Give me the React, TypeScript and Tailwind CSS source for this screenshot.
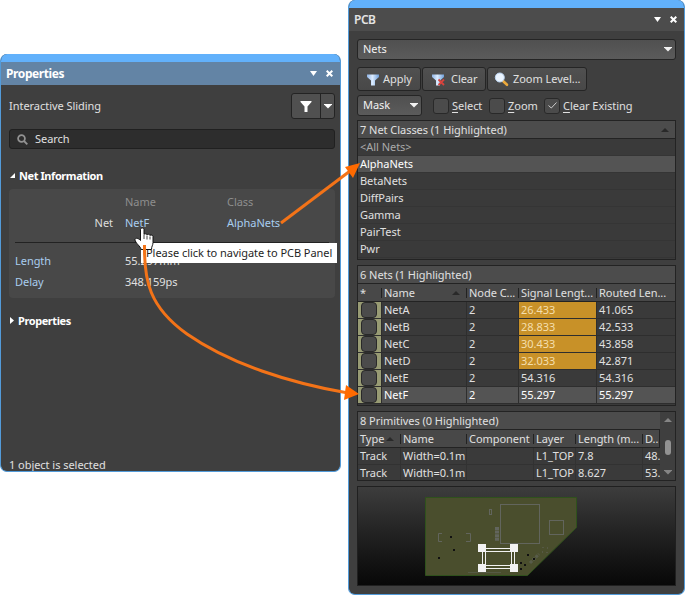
import type { ReactNode } from "react";

const netClasses = ["<All Nets>", "AlphaNets", "BetaNets", "DiffPairs", "Gamma", "PairTest", "Pwr"];

const nets = [
  { name: "NetA", nodes: 2, signal: "26.433", routed: "41.065", warn: true },
  { name: "NetB", nodes: 2, signal: "28.833", routed: "42.533", warn: true },
  { name: "NetC", nodes: 2, signal: "30.433", routed: "43.858", warn: true },
  { name: "NetD", nodes: 2, signal: "32.033", routed: "42.871", warn: true },
  { name: "NetE", nodes: 2, signal: "54.316", routed: "54.316", warn: false },
  { name: "NetF", nodes: 2, signal: "55.297", routed: "55.297", warn: false },
];

const primitives = [
  { type: "Track", name: "Width=0.1m", layer: "L1_TOP", length: "7.8", delay: "48." },
  { type: "Track", name: "Width=0.1m", layer: "L1_TOP", length: "8.627", delay: "53." },
];

const netGrid = "grid grid-cols-[23px_85px_52px_78px_1fr]";
const netCell = "flex items-center border-b border-l border-[#2e2e2e] pb-px pl-[2px]";
const primitiveGrid = "grid grid-cols-[42px_66px_67px_42px_67px_1fr]";
const primitiveCell = "flex items-center overflow-hidden border-b border-l border-[#323232] pb-px pl-[2px]";

const DownTriangle = ({ className = "" }: { className?: string }) => (
  <svg className={className} width="8" height="5" viewBox="0 0 8 5" fill="currentColor">
    <path d="M0 0h8v.5L4 4.500 0 .5z" />
  </svg>
);

const UpTriangle = ({ className = "" }: { className?: string }) => (
  <svg className={className} width="8" height="4" viewBox="0 0 8 4" fill="currentColor">
    <path d="M0 4h8L4 0z" />
  </svg>
);

const TitleButtons = () => (
  <span className="flex items-center gap-[9px] text-white">
    <svg width="7" height="5" viewBox="0 0 7 5" fill="currentColor">
      <path d="M0 0h7L3.500 5z" />
    </svg>
    <svg width="7" height="7" viewBox="0 0 7 7" stroke="currentColor" strokeWidth="2">
      <path d="M.7 .7l5.6 5.6M6.3 .7L.7 6.3" />
    </svg>
  </span>
);

const BlueFunnel = ({ crossed = false }: { crossed?: boolean }) => (
  <svg width="14" height="13" viewBox="0 0 14 13">
    <defs>
      <linearGradient id="funnel" x1="0" x2="1">
        <stop offset="0" stopColor="#8fb4e6" />
        <stop offset=".45" stopColor="#dcecff" />
        <stop offset="1" stopColor="#6f9fda" />
      </linearGradient>
    </defs>
    <path d="M1 1.500h12v2.500L9 7.500V12.500H5V7.500L1 4z" fill="url(#funnel)" />
    {crossed && <path d="M7.500 6.500l5.500 5.500M13 6.500L7.500 12" stroke="#d8433d" strokeWidth="1.8" />}
  </svg>
);

const Magnifier = () => (
  <svg width="15" height="15" viewBox="0 0 15 15">
    <path d="M9 9l4 3.800" stroke="#eba93c" strokeWidth="2.600" strokeLinecap="round" />
    <circle cx="5.800" cy="5.500" r="4.500" fill="#eaf4ff" stroke="#bcd5f2" />
  </svg>
);

const ToolButton = ({ icon, label, className }: { icon: ReactNode; label: string; className: string }) => (
  <button
    type="button"
    className={`flex h-6 items-center rounded-[3px] border border-[#252525] bg-linear-to-b from-[#505050] to-[#484848] ${className}`}
  >
    {icon}
    <span className="pb-px">{label}</span>
  </button>
);

const Option = ({ label, checked = false }: { label: string; checked?: boolean }) => (
  <label className="flex items-center gap-[3px]">
    <span className="flex size-4 items-center justify-center rounded-[3px] border border-[#292929] bg-[#4b4b4b]">
      {checked && (
        <svg width="9" height="7" viewBox="0 0 9 7" fill="none" stroke="#ccc">
          <path d="M.5 3.500L3.300 6 8.500 .5" />
        </svg>
      )}
    </span>
    <span>
      <span className="underline underline-offset-2">{label[0]}</span>
      {label.slice(1)}
    </span>
  </label>
);

const HeadCell = ({ label, sorted = false, first = false }: { label: string; sorted?: boolean; first?: boolean }) => (
  <div className="flex min-w-0 items-center overflow-hidden whitespace-nowrap">
    {!first && <span className="h-[10px] w-px shrink-0 bg-[#222]" />}
    <span className="pl-[2px]">{label}</span>
    {sorted && <UpTriangle className="mr-[6px] ml-auto shrink-0 text-[#292929]" />}
  </div>
);

const PropertiesPanel = () => (
  <section className="mt-[54px] flex h-[418px] w-[341px] flex-col overflow-hidden rounded-[7px] border border-t-0 border-[#539bd9] bg-[#3f3f3f]">
    <div className="h-2 shrink-0 bg-[#62b1fb]" />
    <header className="flex h-[23px] shrink-0 items-center justify-between bg-[#6384a5] pr-[7px] pl-[5px]">
      <h2 className="text-[12px] font-bold tracking-[-0.4px] text-white">Properties</h2>
      <TitleButtons />
    </header>
    <div className="mt-2 flex h-[26px] items-center justify-between pr-[5px] pl-2">
      <span className="pb-px">Interactive Sliding</span>
      <div className="flex h-[26px] w-11 rounded-[3px] border border-[#232323] bg-[#505050] text-white">
        <span className="flex flex-1 items-center justify-center">
          <svg width="12" height="11" viewBox="0 0 12 11" fill="currentColor">
            <path d="M.5 0h11v1L7.500 5.500V11h-3V5.500L.5 1z" />
          </svg>
        </span>
        <span className="flex w-[14px] items-center justify-center border-l border-[#232323]">
          <DownTriangle />
        </span>
      </div>
    </div>
    <div className="mt-[10px] mr-[5px] ml-2 flex h-5 items-center gap-[7px] rounded-[3px] border border-[#202020] bg-[#2d2d2d] pl-[7px]">
      <svg width="11" height="11" viewBox="0 0 11 11" fill="none" stroke="#929292" strokeWidth="1.8">
        <circle cx="4.500" cy="4.500" r="3.400" />
        <path d="M7 7l3.300 3.300" />
      </svg>
      <span className="pb-px">Search</span>
    </div>
    <div className="mt-[18px] flex h-[18px] items-center gap-[4px] pb-px pl-[9px] font-bold tracking-[-0.42px] text-white">
      <svg width="5" height="5" viewBox="0 0 5 5" fill="currentColor">
        <path d="M5 0v5H0z" />
      </svg>
      <span>Net Information</span>
    </div>
    <div className="mt-1 mr-[5px] ml-2 h-[109px] rounded-[4px] bg-[#484848] pt-[3px] pl-[6px]">
      <div className="grid h-5 grid-cols-[110px_102px_1fr] items-center pb-px text-[#8e8e8e]">
        <span />
        <span>Name</span>
        <span>Class</span>
      </div>
      <div className="grid h-[22px] grid-cols-[110px_102px_1fr] items-center pb-px text-[#a9cdef]">
        <span className="pr-3 text-right text-[#ddd]">Net</span>
        <span>NetF</span>
        <span>AlphaNets</span>
      </div>
      <div className="mt-2 mr-[6px] border-t border-[#222]" />
      <div className="mt-[7px] grid h-[21px] grid-cols-[110px_1fr] items-center">
        <span className="text-[#a9cdef]">Length</span>
        <span>55.297mm</span>
      </div>
      <div className="grid h-[21px] grid-cols-[110px_1fr] items-center">
        <span className="text-[#a9cdef]">Delay</span>
        <span>348.159ps</span>
      </div>
    </div>
    <div className="mt-[14px] flex h-[18px] items-center gap-[4px] pb-px pl-[9px] font-bold tracking-[-0.42px] text-white">
      <svg width="4" height="7" viewBox="0 0 4 7" fill="currentColor">
        <path d="M0 0v7l4-3.500z" />
      </svg>
      <span>Properties</span>
    </div>
    <footer className="mt-auto pl-2 leading-[13px]">1 object is selected</footer>
  </section>
);

const BoardPreview = () => (
  <svg className="block" width="317" height="98" viewBox="358 487 317 98" fill="none">
    <path d="M425.500 497.500h151v30l-49 48h-102z" fill="#4a4e2d" stroke="#2f511c" />
    <g stroke="#62655d">
      <rect x="500.500" y="504.500" width="39" height="39" />
      <rect x="549.500" y="520.500" width="14" height="14" />
      <path d="M442 533.500h-3.500v8h3.500M466 533.500h4.500v8h-4.500" />
      <rect x="489.500" y="509.500" width="2" height="5" />
      <path d="M497 527v14" strokeWidth="4" strokeDasharray="3 .6" />
      <path d="M530 563l9-9" strokeWidth="3" strokeDasharray="3 1" opacity=".6" />
      <rect x="542.500" y="547.500" width="5" height="5" strokeDasharray="1 4" />
      <path d="M468 572.500h33" opacity=".5" />
    </g>
    <g fill="#111">
      {[[450, 536], [453, 549], [438, 557], [527, 554], [533, 558], [520, 562], [524, 564], [520, 568]].map(([x, y]) => (
        <rect key={`${x}-${y}`} x={x} y={y} width="2" height="2" />
      ))}
    </g>
    <path d="M482 548.500h32M482 551.500h32M482 565.500h32M482 568.500h32M482.500 548v20M485.500 548v20M511.500 548v20M514.500 548v20" stroke="#f2f2f2" />
    <path d="M478 544h8v8h-8zM510 544h8v8h-8zM478 564h8v8h-8zM510 564h8v8h-8z" fill="#f2f2f2" />
  </svg>
);

const PcbPanel = () => (
  <section className="ml-[7px] h-[595px] w-[337px] overflow-hidden rounded-[7px] border border-t-0 border-[#539bd9] bg-[#3f3f3f]">
    <div className="h-2 bg-[#62b1fb]" />
    <header className="flex h-[23px] items-center justify-between bg-[#4c4c4c] pr-[7px] pl-[5px]">
      <h2 className="pb-px text-[12px] font-semibold tracking-[-0.5px] text-[#e4e4e4]">PCB</h2>
      <TitleButtons />
    </header>
    <div className="flex flex-col px-2 pt-2">
      <div className="flex h-[21px] items-center justify-between rounded-[3px] border border-[#252525] bg-linear-to-b from-[#505050] to-[#5b5b5b] pr-[3px] pl-[5px] text-[#f2f2f2]">
        <span className="pb-[2px]">Nets</span>
        <DownTriangle />
      </div>
      <div className="mt-[7px] flex gap-px">
        <ToolButton icon={<BlueFunnel />} label="Apply" className="w-16 gap-[3px] pl-2" />
        <ToolButton icon={<BlueFunnel crossed />} label="Clear" className="w-16 gap-[6px] pl-2" />
        <ToolButton icon={<Magnifier />} label="Zoom Level..." className="w-[100px] gap-[4px] pl-[6px]" />
      </div>
      <div className="mt-1 flex h-[21px] items-center">
        <div className="mr-[11px] flex h-[21px] w-[65px] items-center justify-between rounded-[3px] border border-[#252525] bg-linear-to-b from-[#505050] to-[#5b5b5b] pr-[3px] pl-[5px] text-[#f2f2f2]">
          <span className="pb-[2px]">Mask</span>
          <DownTriangle />
        </div>
        <div className="grid grid-cols-[56px_55px_auto]">
          <Option label="Select" />
          <Option label="Zoom" />
          <Option label="Clear Existing" checked />
        </div>
      </div>

      <div className="mt-1 h-[140px] border border-[#232323] bg-[#3a3a3a]">
        <div className="flex h-[18px] items-center justify-between border-b border-[#232323] bg-[#4c4c4c] pr-[6px] pl-[2px]">
          <span>7 Net Classes (1 Highlighted)</span>
          <UpTriangle className="text-[#292929]" />
        </div>
        {netClasses.map((name, index) => (
          <div
            key={name}
            className={`flex h-[17px] items-center border-b border-[#353535] pb-px pl-[2px] ${
              index === 0 ? "text-[#aaa]" : index === 1 ? "bg-[#545454] text-white" : ""
            }`}
          >
            {name}
          </div>
        ))}
      </div>

      <div className="mt-[5px] h-[141px] border border-[#232323] bg-[#3a3a3a]">
        <div className="flex h-[18px] items-center border-b border-[#232323] bg-[#4c4c4c] pl-[2px]">6 Nets (1 Highlighted)</div>
        <div className={`${netGrid} h-[18px] border-b border-[#232323] bg-[#484848]`}>
          <HeadCell label="*" first />
          <HeadCell label="Name" sorted />
          <HeadCell label="Node C..." />
          <HeadCell label="Signal Lengt..." />
          <HeadCell label="Routed Len..." />
        </div>
        {nets.map((net) => (
          <div key={net.name} className={`${netGrid} h-[17px] ${net.name === "NetF" ? "bg-[#545454] text-white" : ""}`}>
            <div className="flex items-center border-b border-[#2e2e2e] bg-[#989b74] pl-[3px]">
              <span className="h-4 w-4 rounded-[4px] border border-[#292929] bg-[#4b4b4b]" />
            </div>
            <div className={netCell}>{net.name}</div>
            <div className={netCell}>{net.nodes}</div>
            <div className={`${netCell} ${net.warn ? "bg-[#c89128] text-[#f4dfae]" : ""}`}>{net.signal}</div>
            <div className={netCell}>{net.routed}</div>
          </div>
        ))}
      </div>

      <div className="mt-[5px] flex h-[70px] border border-[#232323] bg-[#3a3a3a]">
        <div className="w-[302px] overflow-hidden">
          <div className="flex h-[18px] items-center border-b border-[#232323] bg-[#4c4c4c] pl-[2px]">8 Primitives (0 Highlighted)</div>
          <div className={`${primitiveGrid} h-[18px] border-r border-b border-[#232323] bg-[#484848]`}>
            <HeadCell label="Type" sorted first />
            <HeadCell label="Name" />
            <HeadCell label="Component" />
            <HeadCell label="Layer" />
            <HeadCell label="Length (m..." />
            <HeadCell label="D.." />
          </div>
          {primitives.map((item) => (
            <div key={item.length} className={`${primitiveGrid} h-[17px]`}>
              <div className="flex items-center border-b border-[#323232] pb-px pl-[2px]">{item.type}</div>
              <div className={primitiveCell}>{item.name}</div>
              <div className={primitiveCell} />
              <div className={primitiveCell}>{item.layer}</div>
              <div className={primitiveCell}>{item.length}</div>
              <div className={primitiveCell}>{item.delay}</div>
            </div>
          ))}
        </div>
        <div className="flex flex-1 flex-col items-center bg-[#3f3f3f] pt-[6px] pb-[5px] text-[#858585]">
          <UpTriangle />
          <span className="mt-[18px] h-[15px] w-[6px] rounded-full bg-[#929292]" />
          <DownTriangle className="mt-auto" />
        </div>
      </div>

      <div className="mt-[5px] h-[100px] border border-[#202020] bg-linear-to-b from-[#3d3d3d] to-[#080808]">
        <BoardPreview />
      </div>
    </div>
  </section>
);

const App = () => (
  <main className="relative flex h-[595px] w-[685px] items-start overflow-hidden bg-white font-['Noto_Sans',sans-serif] text-[11px] leading-[15px] tracking-[-0.04px] text-[#e0e0e0]">
    <PropertiesPanel />
    <PcbPanel />
    <div className="absolute top-[243px] left-[141px] flex h-5 w-[196px] items-center bg-white pb-px pl-[5px] whitespace-nowrap text-[#1f1f1f]">
      Please click to navigate to PCB Panel
    </div>
    <svg className="absolute inset-0" width="685" height="595" viewBox="0 0 685 595" fill="none">
      <path
        d="M140.500 229.500c0-2 3.500-2 3.500 0v5c0-1 3-1 3 .5 0-1 3-1 3 .5 0-1 3-.5 3 1v6c0 3-1.500 3.500-1.500 7h-10.500c0-3-6-6.500-6-10 0-1.500 3-2 5.500 1z"
        fill="#fff"
        stroke="#111"
      />
      <path d="M144 235v4M147 235.500v4M150 236.500v3" stroke="#111" strokeWidth=".8" />
      <path d="M144.500 245C144 280 149 307 187 334C230 364 290 383 348 393" stroke="#f37318" strokeWidth="3" />
      <path d="M359 394l-15 6 2-15z" fill="#ff6a00" />
      <path d="M281 223l69-52" stroke="#f37318" strokeWidth="3" />
      <path d="M360 163l-15 4 8 11z" fill="#ff6a00" />
    </svg>
  </main>
);

export default App;
